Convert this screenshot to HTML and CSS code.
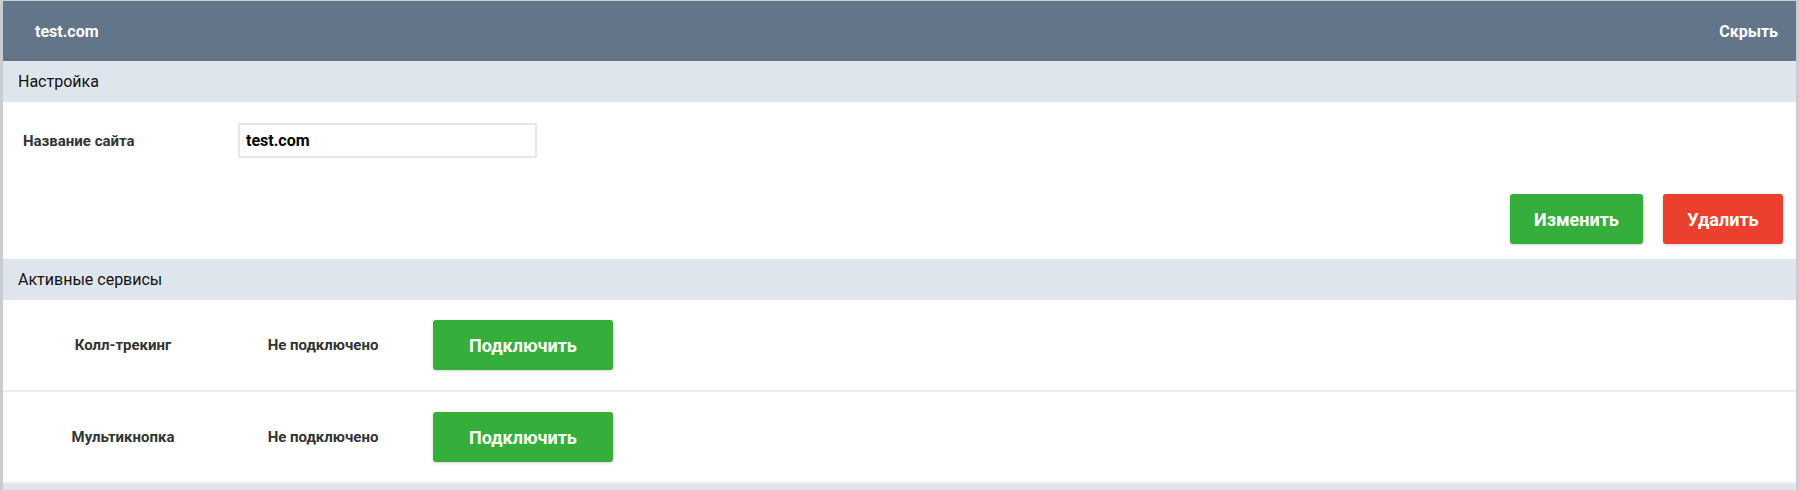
FILE: index.html
```html
<!DOCTYPE html>
<html lang="ru">
<head>
<meta charset="utf-8">
<title>test.com</title>
<link rel="stylesheet" href="styles.css">
</head>
<body>
<div class="panel">
  <div class="panel-head">
    <span class="site-title">test.com</span>
    <a class="hide-link">Скрыть</a>
  </div>

  <div class="section-title">Настройка</div>
  <div class="settings">
    <div class="field">
      <label class="field-label">Название сайта</label>
      <input class="field-input" type="text" value="test.com">
    </div>
    <div class="actions">
      <button class="btn btn-green btn-edit">Изменить</button>
      <button class="btn btn-red btn-delete">Удалить</button>
    </div>
  </div>

  <div class="section-title">Активные сервисы</div>
  <div class="services">
    <div class="service-row">
      <div class="service-name">Колл-трекинг</div>
      <div class="service-status">Не подключено</div>
      <button class="btn btn-green btn-connect">Подключить</button>
    </div>
    <div class="service-row">
      <div class="service-name">Мультикнопка</div>
      <div class="service-status">Не подключено</div>
      <button class="btn btn-green btn-connect">Подключить</button>
    </div>
  </div>
  <div class="section-title section-empty"></div>
</div>
</body>
</html>
```

FILE: styles.css
```css
* { box-sizing: border-box; }

html, body {
  margin: 0;
  padding: 0;
  background: #ffffff;
  font-family: Roboto, "Liberation Sans", Arial, sans-serif;
  overflow: hidden;
}

.panel {
  border-left: 3px solid #c9cdd2;
  border-right: 3px solid #c9cdd2;
  border-top: 1px solid #c9cdd2;
  height: 490px;
  overflow: hidden;
}

.panel-head {
  height: 60px;
  background: #637689;
  display: flex;
  align-items: center;
  justify-content: space-between;
  padding: 0 18px 0 32px;
  color: #ffffff;
  font-weight: 700;
  font-size: 16px;
}

.hide-link {
  color: #ffffff;
  cursor: pointer;
}

.section-title {
  background: #dfe5ed;
  height: 41px;
  display: flex;
  align-items: center;
  padding-left: 15px;
  font-size: 16px;
  color: #111111;
}

.section-empty {
  border-top: 2px solid #ececec;
}

.settings {
  padding: 21px 13px 15px 20px;
}

.field {
  display: flex;
  align-items: center;
}

.field-label {
  width: 215px;
  font-size: 15px;
  font-weight: 700;
  color: #333333;
}

.field-input {
  width: 299px;
  height: 35px;
  border: 2px solid #e6e6e6;
  padding: 0 6px;
  font-family: inherit;
  font-size: 16px;
  font-weight: 700;
  color: #000000;
  outline: none;
}

.actions {
  display: flex;
  justify-content: flex-end;
  gap: 20px;
  margin-top: 36px;
}

.btn {
  height: 50px;
  border: none;
  border-radius: 3px;
  color: #ffffff;
  font-family: inherit;
  font-size: 18px;
  font-weight: 700;
  box-shadow: 0 1px 3px rgba(0, 0, 0, 0.18);
  cursor: pointer;
}

.btn-green { background: #36ae3b; }
.btn-red { background: #ec402e; }

.btn-edit { width: 133px; }
.btn-delete { width: 120px; }
.btn-connect { width: 180px; }

.service-row {
  display: flex;
  align-items: center;
  padding: 20px 0;
  border-bottom: 2px solid #ececec;
  font-size: 15px;
  font-weight: 700;
  color: #333333;
}

.service-row:last-child {
  border-bottom: none;
}

.service-name {
  width: 240px;
  text-align: center;
}

.service-status {
  width: 160px;
  text-align: center;
  margin-right: 30px;
}
```
